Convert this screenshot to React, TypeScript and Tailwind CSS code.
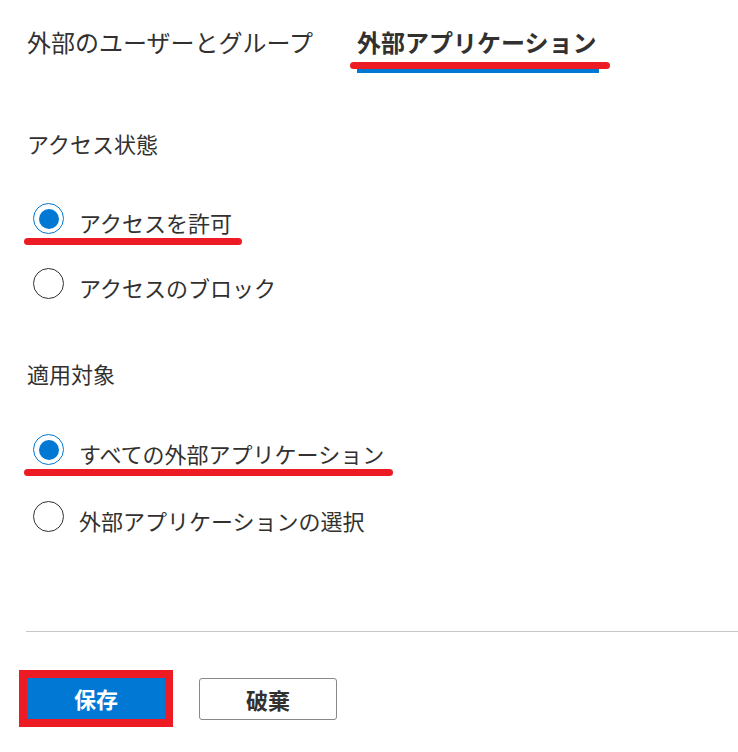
/** External applications access settings — tab + two radio groups + footer buttons. */

import { useState } from "react";

const ACCESS_OPTIONS = ["アクセスを許可", "アクセスのブロック"] as const;
const TARGET_OPTIONS = ["すべての外部アプリケーション", "外部アプリケーションの選択"] as const;

function Radio({ checked }: { checked: boolean }) {
  return (
    <span
      className={
        checked
          ? "flex h-[31px] w-[31px] shrink-0 items-center justify-center rounded-full border-[1.5px] border-[#0078d4]"
          : "flex h-[31px] w-[31px] shrink-0 items-center justify-center rounded-full border-[1.5px] border-[#323130]"
      }
    >
      {checked && <span className="h-[20px] w-[20px] rounded-full bg-[#0078d4]" />}
    </span>
  );
}

function RadioRow({
  label,
  checked,
  onSelect,
  mark,
  className,
}: {
  label: string;
  checked: boolean;
  onSelect: () => void;
  /** width of the red annotation stroke under the row, if any */
  mark?: number;
  className?: string;
}) {
  return (
    <div className={`relative ml-[6px] ${className ?? ""}`}>
      <button onClick={onSelect} className="flex h-[31px] items-center gap-[15px] text-left">
        <Radio checked={checked} />
        <span className="mt-[6px] text-[22px] leading-[30px]">{label}</span>
      </button>
      {mark !== undefined && (
        <div
          className="absolute left-[-9px] top-[35px] h-[7px] rounded-full bg-[#ed1c24]"
          style={{ width: mark }}
        />
      )}
    </div>
  );
}

export default function App() {
  const [access, setAccess] = useState(0);
  const [target, setTarget] = useState(0);

  return (
    <div className="h-[752px] w-[738px] overflow-hidden bg-white font-['Noto_Sans_CJK_JP','Noto_Sans',sans-serif] text-[#323130]">
      {/* tabs */}
      <div className="flex gap-[44px] pl-[27px] pt-[26px]">
        <div className="text-[24px] leading-[32px]">外部のユーザーとグループ</div>
        <div className="relative flex flex-col">
          <div className="text-[24px] font-bold leading-[32px]">外部アプリケーション</div>
          <div className="mt-[11px] h-[4px] w-[242px] bg-[#0078d4]" />
          <div className="absolute left-[-7px] top-[36px] h-[7px] w-[260px] rounded-full bg-[#ed1c24]" />
        </div>
      </div>

      <div className="flex flex-col px-[27px]">
        <div className="mt-[55px] text-[22px] leading-[30px]">アクセス状態</div>
        <RadioRow
          className="mt-[45px]"
          label={ACCESS_OPTIONS[0]}
          checked={access === 0}
          onSelect={() => setAccess(0)}
          mark={218}
        />
        <RadioRow
          className="mt-[34px]"
          label={ACCESS_OPTIONS[1]}
          checked={access === 1}
          onSelect={() => setAccess(1)}
        />

        <div className="mt-[59px] text-[22px] leading-[30px]">適用対象</div>
        <RadioRow
          className="mt-[46px]"
          label={TARGET_OPTIONS[0]}
          checked={target === 0}
          onSelect={() => setTarget(0)}
          mark={369}
        />
        <RadioRow
          className="mt-[36px]"
          label={TARGET_OPTIONS[1]}
          checked={target === 1}
          onSelect={() => setTarget(1)}
        />
      </div>

      <div className="ml-[26px] mt-[99px] h-px bg-[#c8c6c4]" />

      {/* footer */}
      <div className="mt-[46px] flex gap-[34px] pl-[27px]">
        <button className="h-[41px] w-[138px] bg-[#0078d4] text-[22px] font-bold text-white outline-[8px] outline-[#ed1c24] outline-solid">
          保存
        </button>
        <button className="h-[42px] w-[138px] rounded-[3px] border border-[#8a8886] text-[22px] font-bold text-[#323130]">
          破棄
        </button>
      </div>
    </div>
  );
}
